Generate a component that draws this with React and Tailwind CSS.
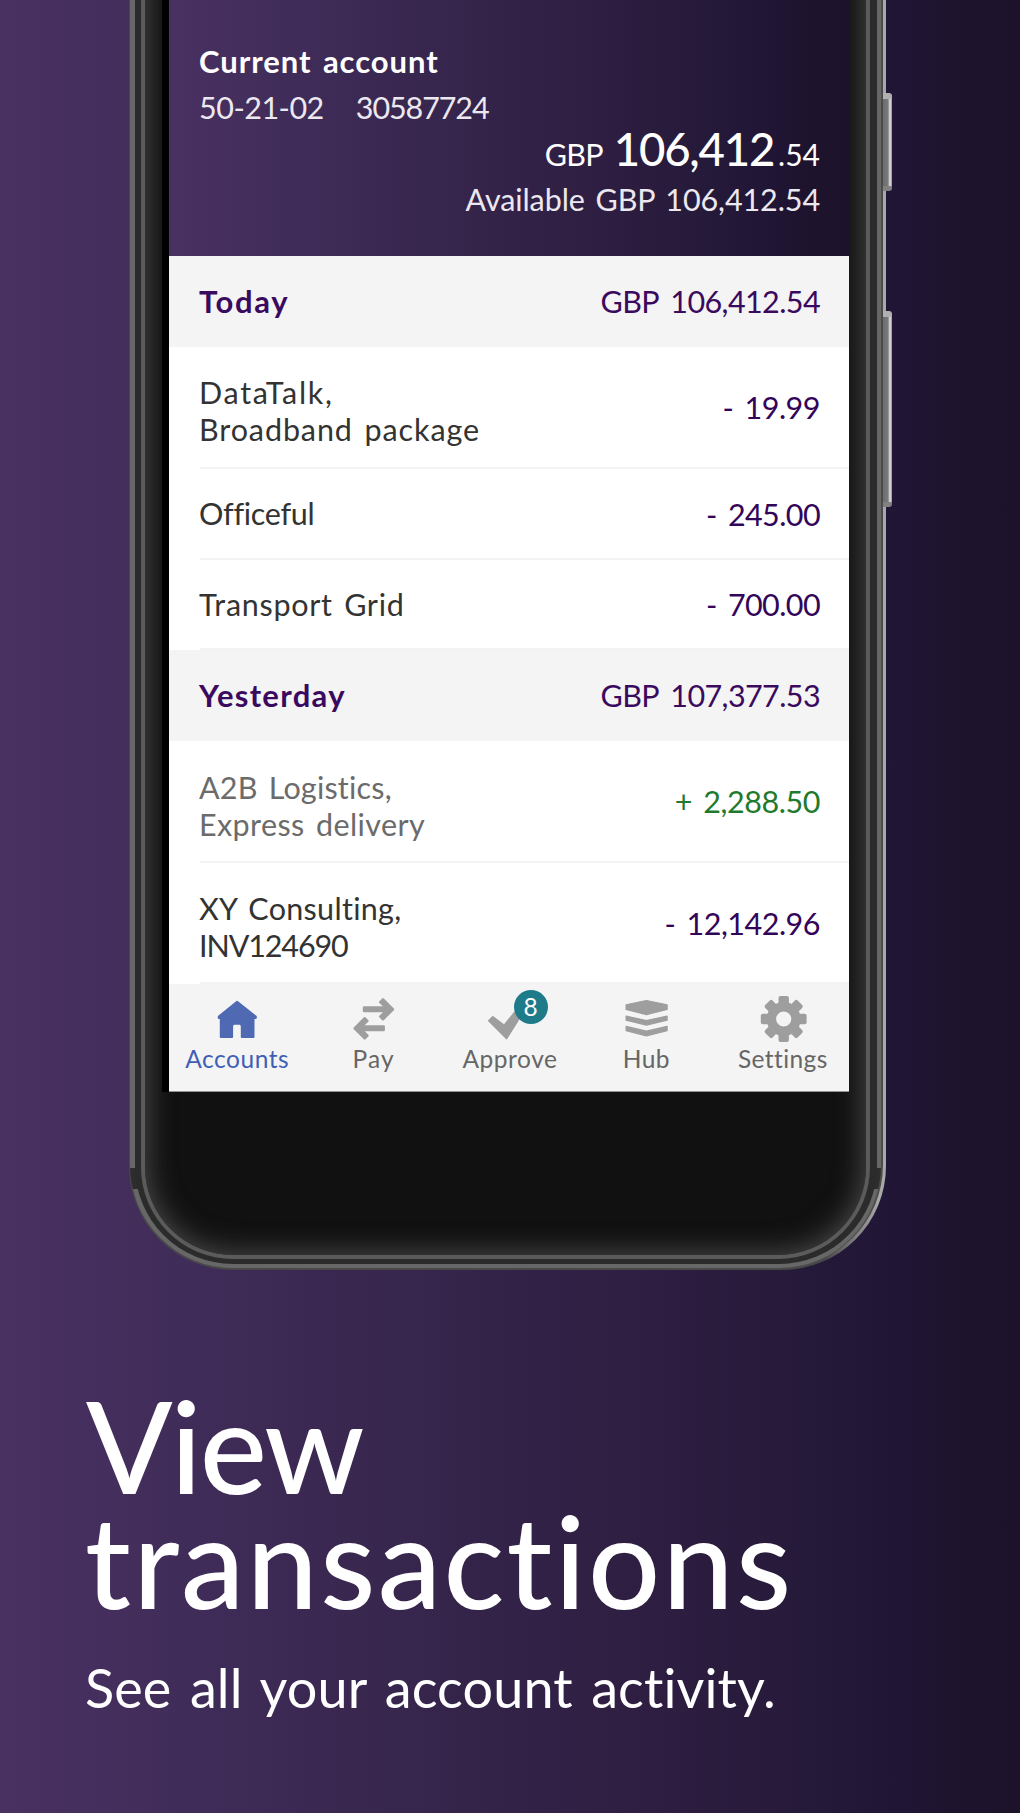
const backdrop =
  "bg-[linear-gradient(to_right,#493162_0%,#3e2b57_22%,#35244a_45%,#2d1d40_66%,#261a3a_78%,#201534_89%,#1d132c_95%,#1c122a_100%)]";

const today = [
  {
    lines: [
      { text: "DataTalk,", track: "tracking-[1.7px]" },
      { text: "Broadband package", track: "tracking-[0.9px]" },
    ],
    amount: "- 19.99",
    amountTrack: "tracking-[-0.5px]",
    box: "h-[122px]",
    shift: "pt-[7px]",
  },
  {
    lines: [{ text: "Officeful", track: "tracking-[-0.3px]" }],
    amount: "- 245.00",
    amountTrack: "tracking-[-0.6px]",
    box: "h-[91px]",
    shift: "pt-[0px]",
  },
  {
    lines: [{ text: "Transport Grid", track: "tracking-[0.7px]" }],
    amount: "- 700.00",
    amountTrack: "tracking-[-0.6px]",
    box: "h-[90px]",
    shift: "pt-[1px]",
  },
];

const yesterday = [
  {
    lines: [
      { text: "A2B Logistics,", track: "tracking-[0.2px]" },
      { text: "Express delivery", track: "tracking-[0.4px]" },
    ],
    amount: "+ 2,288.50",
    amountTrack: "tracking-[-0.45px]",
    credit: true,
    box: "h-[122px]",
    shift: "pt-[9px]",
  },
  {
    lines: [
      { text: "XY Consulting,", track: "tracking-[0.3px]" },
      { text: "INV124690", track: "tracking-[-1.1px]" },
    ],
    amount: "- 12,142.96",
    amountTrack: "tracking-[-0.5px]",
    box: "h-[121px]",
    shift: "pt-[9px]",
  },
];

function AccountHeader() {
  return (
    <header className={`h-[256px] pt-[38px] pl-[30px] pr-[29px] text-[30.5px] leading-[46px] text-white ${backdrop}`}>
      <h2 className="text-[31px] font-bold tracking-[0.95px] [word-spacing:3px]">Current account</h2>
      <div className="flex gap-[32px] text-[#ece8f0]">
        <span className="tracking-[-0.5px]">50-21-02</span>
        <span className="tracking-[-1.1px]">30587724</span>
      </div>
      <div className="-mt-[4px] flex h-[50px] items-baseline justify-end">
        <span className="mr-[11px] tracking-[-0.8px]">GBP</span>
        <span className="mr-[4px] text-[45.5px] font-medium tracking-[-1.2px]">106,412</span>
        <span className="text-[30px]">.54</span>
      </div>
      <p className="text-right tracking-[-0.1px] text-[#ece8f0] [word-spacing:3px]">Available GBP 106,412.54</p>
    </header>
  );
}

function DayHeading({ label, track, total }) {
  return (
    <div className="flex h-[91px] items-center justify-between bg-[#f4f4f4] pl-[30px] pr-[29px] text-[#3a0a5e]">
      <h3 className={`text-[31px] font-bold ${track}`}>{label}</h3>
      <span className="tracking-[-0.6px] [word-spacing:5px]">{total}</span>
    </div>
  );
}

function Transaction({ item }) {
  return (
    <li className={`ml-[31px] flex items-center justify-between border-b-2 border-[#f3f3f3] pr-[29px] ${item.box}`}>
      <div className={`-ml-px leading-[37px] [word-spacing:3px] ${item.shift} ${item.credit ? "text-[#6b6b6b]" : "text-[#333333]"}`}>
        {item.lines.map((l) => (
          <p key={l.text} className={l.track}>{l.text}</p>
        ))}
      </div>
      <span className={`pt-[2px] [word-spacing:4px] ${item.amountTrack} ${item.credit ? "text-[#1f7a2e]" : "text-[#33055a]"}`}>{item.amount}</span>
    </li>
  );
}

function HomeIcon() {
  return (
    <svg viewBox="0 0 48 48" className="size-12" fill="currentColor" stroke="currentColor" strokeWidth="2" strokeLinejoin="round">
      <path d="M24.1 7.8 42.8 22.6V24H40.5V43H28.8V32.4Q28.8 29.8 26.6 29.8H21.4Q19.1 29.8 19.1 32.4V43H7.8V24H5.8V22.6Z" />
    </svg>
  );
}

function PayIcon() {
  return (
    <svg viewBox="0 0 48 48" className="size-12" fill="currentColor" stroke="currentColor" strokeWidth="2.4" strokeLinejoin="round">
      <path d="M43 15.3 33 5.3 30.2 8.1 35.8 13.5H14V17.1H35.8L30.2 22.5 33 25.3Z" />
      <path d="M4.6 34.3 14.7 24.2 17.5 27 11.8 32.5H33.7V36.1H11.8L17.5 41.6 14.7 44.4Z" />
    </svg>
  );
}

function ApproveIcon() {
  return (
    <div className="relative size-12">
      <svg viewBox="0 0 48 48" className="size-12" fill="currentColor">
        <path d="M1.7 26.7 6.7 21.7 18 30.3 36 8 42 12 20.7 45.7Z" />
      </svg>
      <span className="absolute left-[27.7px] top-[-3.7px] flex size-[34px] items-center justify-center rounded-full bg-[#1d7b8a] pb-px text-[24.5px] leading-none text-white">
        8
      </span>
    </div>
  );
}

function HubIcon() {
  return (
    <svg viewBox="0 0 48 48" className="size-12" fill="currentColor" stroke="currentColor" strokeWidth="1.2" strokeLinejoin="round">
      <path d="M24.4 6.5 45.1 10.8V15.4L24.4 20.6 4.1 15.4V10.8Z" />
      <path d="M4.1 22.1 24.4 26.6 45.1 22.1V26.2L24.4 31.1 4.1 26.2Z" />
      <path d="M4.1 32.4 24.4 37.2 45.1 32.4V36.6L24.4 41.8 4.1 36.6Z" />
    </svg>
  );
}

function GearIcon() {
  return (
    <svg viewBox="0 0 48 48" className="size-12" fill="currentColor">
      <g transform="translate(24.7 25)">
        <circle r="12.3" fill="none" stroke="currentColor" strokeWidth="9.4" />
        {[0, 45, 90, 135, 180, 225, 270, 315].map((a) => (
          <rect key={a} x="-5.2" y="-22.9" width="10.4" height="10.5" rx="2" transform={`rotate(${a})`} />
        ))}
      </g>
    </svg>
  );
}

const tabs = [
  { label: "Accounts", icon: HomeIcon, track: "tracking-[0.55px]", active: true },
  { label: "Pay", icon: PayIcon, track: "tracking-[1.1px]" },
  { label: "Approve", icon: ApproveIcon, track: "tracking-[0.55px]" },
  { label: "Hub", icon: HubIcon, track: "tracking-[0.5px]" },
  { label: "Settings", icon: GearIcon, track: "tracking-[0.4px]" },
];

function TabBar() {
  return (
    <nav className="grid h-[108px] w-[682px] grid-cols-5 border-b border-[#8f9494] bg-[#f4f4f4] pt-[10px]">
      {tabs.map(({ label, icon: Icon, track, active }) => (
        <div key={label} className={`flex flex-col items-center gap-[3px] ${active ? "text-[#4f6ab3]" : "text-[#9e9e9e]"}`}>
          <Icon />
          <span className={`text-[24.5px] leading-[28px] ${track} ${active ? "text-[#3f5fb5]" : "text-[#666666]"}`}>{label}</span>
        </div>
      ))}
    </nav>
  );
}

function Screen() {
  return (
    <div className="ml-[17px] w-[687px] overflow-hidden border-l-[7px] border-black bg-white text-[30.5px]">
      <AccountHeader />
      <DayHeading label="Today" track="tracking-[1.7px]" total="GBP 106,412.54" />
      <ul>{today.map((t) => <Transaction key={t.amount} item={t} />)}</ul>
      <DayHeading label="Yesterday" track="tracking-[1.3px]" total="GBP 107,377.53" />
      <ul>{yesterday.map((t) => <Transaction key={t.amount} item={t} />)}</ul>
      <TabBar />
    </div>
  );
}

function SideButton({ size }) {
  return (
    <div
      className={`w-[9px] rounded-r-[3px] border-t-[6px] border-b-[5px] border-t-[#b0b0b0] border-b-[#808080] bg-[linear-gradient(to_right,#6c6c6c_0,#7a7a7a_5px,#e8e8e8_7px,#8c8c8c_9px)] ${size}`}
    />
  );
}

function Phone() {
  return (
    <div className="-mt-[60px] flex pl-[129px]">
      <div className="h-[1330px] w-[757px] rounded-b-[104px] bg-[linear-gradient(to_right,#484848_0,#484848_92%,#a8a8a8_99%)] pb-[2px] pl-px pr-[3px]">
        <div className="h-full rounded-b-[103px] border-r-2 border-[#4c4c4c] bg-[linear-gradient(to_bottom,#676767_0,#676767_1228px,#2d2d2d_1228px,#2d2d2d_1249px,#676767_1249px)] pb-[4px] pl-[5px] pr-[4px]">
          <div className="h-full rounded-b-[98px] bg-[#2b2b2b] pb-[5px] pl-[6px] pr-[7px]">
            <div className="h-full rounded-b-[92px] bg-[#5b5b5b] pb-[4px] pl-[4px] pr-[4px]">
              <div className="h-full rounded-b-[88px] bg-[#111111] pt-[60px] shadow-[inset_0_0_28px_2px_#4c4c4c]">
                <Screen />
              </div>
            </div>
          </div>
        </div>
      </div>
      <div className="-ml-[3px] pt-[153px]">
        <SideButton size="h-[98px]" />
        <SideButton size="mt-[120px] h-[196px]" />
      </div>
    </div>
  );
}

export default function App() {
  return (
    <main className={`h-[1813px] w-[1020px] overflow-hidden font-['Lato','Open_Sans',sans-serif] ${backdrop}`}>
      <div className="flow-root">
        <Phone />
      </div>
      <section className="pl-[86px] pt-[118px] text-white">
        <h1 className="text-[127px] font-medium leading-[115px]">
          <span className="block tracking-[-1.9px]">View</span>
          <span className="-ml-px block tracking-[2.3px]">transactions</span>
        </h1>
        <p className="-ml-px mt-[38px] text-[54px] leading-[64px] tracking-[0.1px] [word-spacing:4.5px]">See all your account activity.</p>
      </section>
    </main>
  );
}
